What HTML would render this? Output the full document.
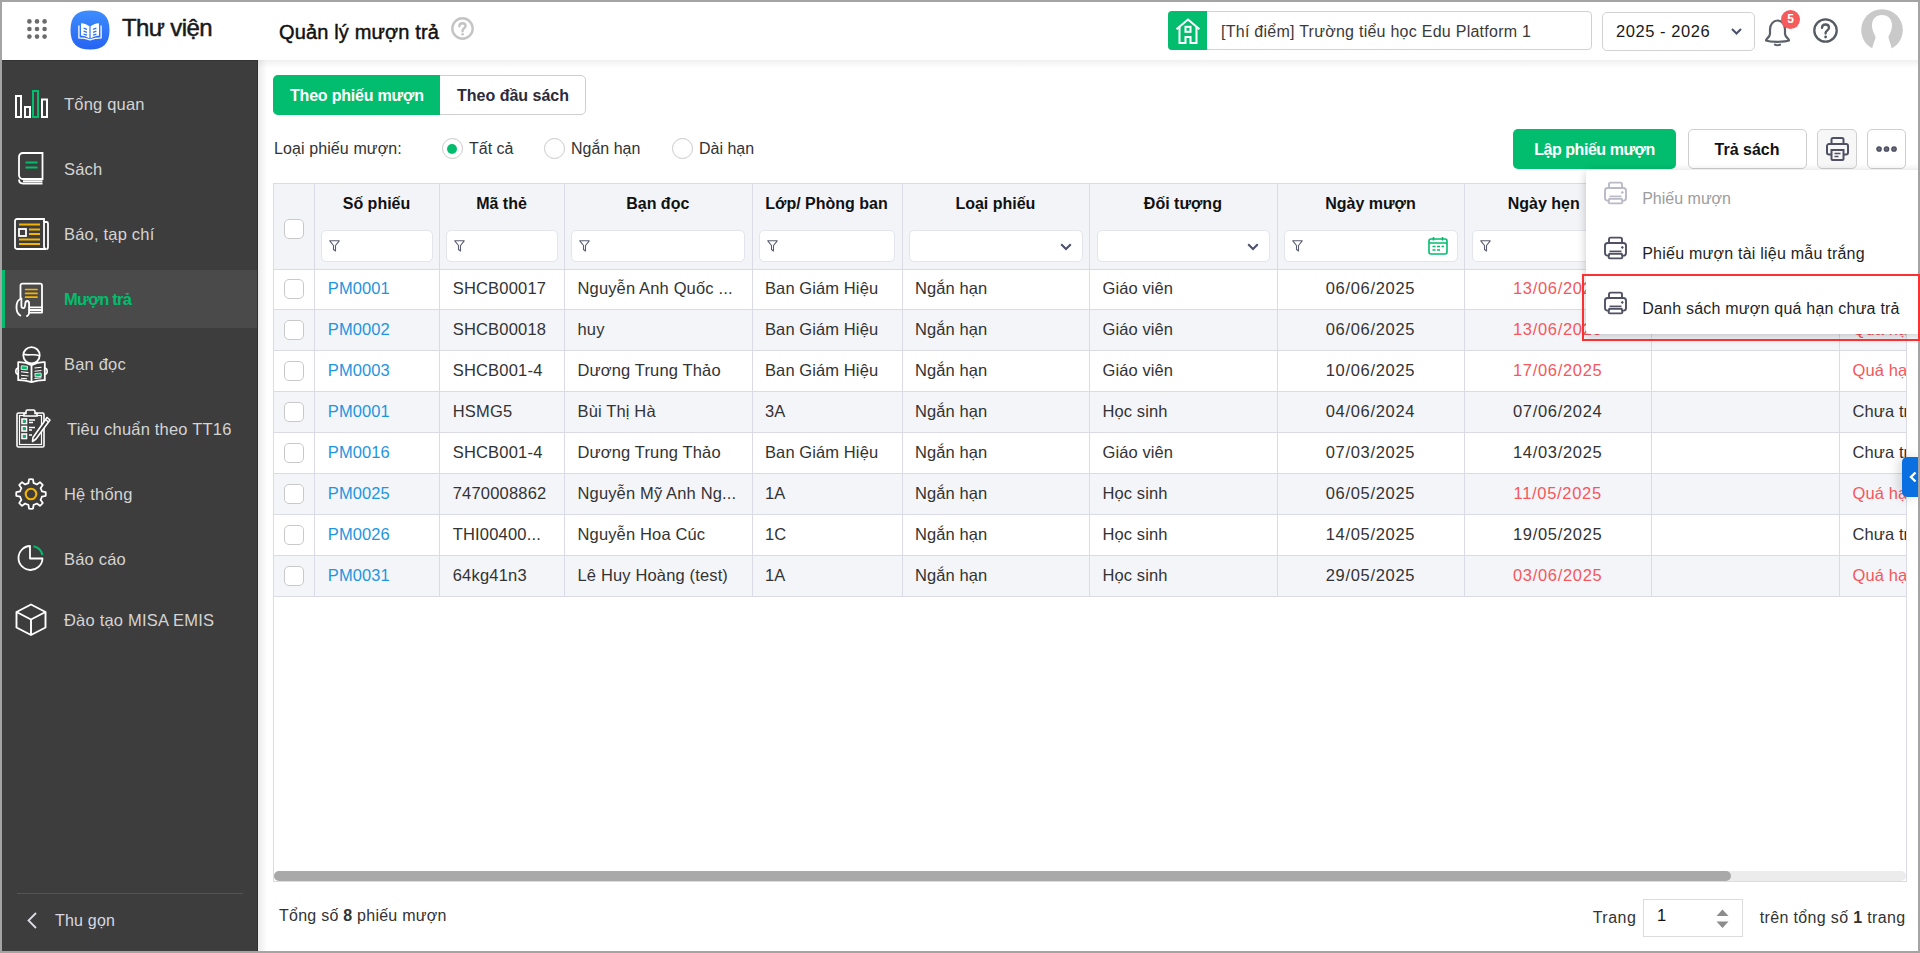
<!DOCTYPE html>
<html><head><meta charset="utf-8">
<style>
*{box-sizing:border-box;margin:0;padding:0}
html,body{width:1920px;height:953px;overflow:hidden;background:#fff;font-family:"Liberation Sans",sans-serif;}
.a{position:absolute}
.t{position:absolute;white-space:nowrap;line-height:1}
svg{position:absolute;overflow:visible}
</style></head><body>

<div class="a" style="left:0;top:0;width:1920px;height:60px;background:#fff"></div>
<svg style="left:27px;top:19px" width="20" height="20" viewBox="0 0 20 20" fill="#6b6b6b"><circle cx="2.4" cy="2.4" r="2.3"/><circle cx="10" cy="2.4" r="2.3"/><circle cx="17.6" cy="2.4" r="2.3"/><circle cx="2.4" cy="10" r="2.3"/><circle cx="10" cy="10" r="2.3"/><circle cx="17.6" cy="10" r="2.3"/><circle cx="2.4" cy="17.6" r="2.3"/><circle cx="10" cy="17.6" r="2.3"/><circle cx="17.6" cy="17.6" r="2.3"/></svg>
<svg style="left:70px;top:10px" width="40" height="40" viewBox="0 0 40 40">
<defs><linearGradient id="lg" x1="0" y1="0" x2="0" y2="1"><stop offset="0" stop-color="#3d8dff"/><stop offset="1" stop-color="#2663f2"/></linearGradient></defs>
<path d="M20 0.5C33 0.5 39.5 6 39.5 20S33 39.5 20 39.5 0.5 34 0.5 20 7 0.5 20 0.5Z" fill="url(#lg)"/>
<path d="M11 13.2C14.5 13.4 17.5 14.5 19.4 16.3V28.6C17.3 27 14.5 26 11 25.6Z" fill="#fff"/>
<path d="M29 13.2C25.5 13.4 22.5 14.5 20.6 16.3V28.6C22.7 27 25.5 26 29 25.6Z" fill="#fff"/>
<path d="M8.9 15.6V27.8C13 27.9 16.5 28.5 20 29.8C23.5 28.5 27 27.9 31.1 27.8V15.6" fill="none" stroke="#fff" stroke-width="1.3"/>
<path d="M13.6 18.2L17 19.4M13.6 21.2L17 22.4M13.6 24.2L17 25.2M23 19.4L26.4 18.2M23 22.4L26.4 21.2M23 25.2L26.4 24.2" stroke="#2f72f6" stroke-width="1.3"/></svg>
<div class="t" style="left:122px;top:16.18px;font-size:24px;color:#1a1a1a;letter-spacing:-0.6px;-webkit-text-stroke:0.5px #1a1a1a;">Thư viện</div>
<div class="t" style="left:279px;top:22.27px;font-size:20px;color:#111;letter-spacing:0.15px;-webkit-text-stroke:0.45px #111;">Quản lý mượn trả</div>
<svg style="left:451px;top:17px" width="23" height="23" viewBox="0 0 23 23"><circle cx="11.5" cy="11.5" r="10.2" fill="none" stroke="#c4c4c4" stroke-width="2.4"/><path d="M8.4 9.2C8.4 7.3 9.8 6.2 11.5 6.2S14.6 7.3 14.6 9C14.6 11 12 11.3 11.6 13.3V14.2" fill="none" stroke="#c4c4c4" stroke-width="2.4" stroke-linecap="round"/><circle cx="11.6" cy="17.3" r="1.2" fill="#c4c4c4"/></svg>
<div class="a" style="left:1167.5px;top:11px;width:424px;height:39px;border:1px solid #d2d2d2;border-radius:4px;background:#fff"></div>
<div class="a" style="left:1167.5px;top:11px;width:39.5px;height:39px;border-radius:4px 0 0 4px;background:#02bd6d"></div>
<svg style="left:1175px;top:18px" width="26" height="26" viewBox="0 0 26 26" fill="none" stroke="#fff" stroke-width="2">
<path d="M1.5 11.2L13 1.5L24.5 11.2"/><path d="M4.5 9V25H10.5V19H15.5V25H21.5V9"/><rect x="10.5" y="8.8" width="5" height="5"/></svg>
<div class="t" style="left:1221px;top:24.06px;font-size:16px;color:#3a3a3a;letter-spacing:0.26px;">[Thí điểm] Trường tiểu học Edu Platform 1</div>
<div class="a" style="left:1602px;top:12px;width:153px;height:39px;border:1px solid #d2d2d2;border-radius:5px;background:#fff"></div>
<div class="t" style="left:1616px;top:23.03px;font-size:16.5px;color:#1a1a1a;letter-spacing:0.55px;">2025 - 2026</div>
<svg style="left:1731px;top:28px" width="11" height="7" viewBox="0 0 11 7"><path d="M1 1L5.5 5.5L10 1" fill="none" stroke="#4b4f6a" stroke-width="2"/></svg>
<svg style="left:1764px;top:17px" width="27" height="30" viewBox="0 0 27 30" fill="none" stroke="#5c6068" stroke-width="2.2" stroke-linecap="round" stroke-linejoin="round">
<path d="M2 23.5C2 21.5 5.5 20.5 6 17V12.5C6 7.5 9.3 3.5 13.5 3.5S21 7.5 21 12.5V17C21.5 20.5 25 21.5 25 23.5C21 25.2 6 25.2 2 23.5Z"/><path d="M11 27.6C12.2 28.4 14.8 28.4 16 27.6"/></svg>
<div class="a" style="left:1781px;top:9.8px;width:19px;height:19px;border-radius:50%;background:#f55b5b;color:#fff;font-size:12px;font-weight:700;text-align:center;line-height:19px">5</div>
<svg style="left:1813px;top:17.5px" width="25" height="25" viewBox="0 0 25 25"><circle cx="12.5" cy="12.5" r="11.2" fill="none" stroke="#555b62" stroke-width="2.3"/><path d="M9 10C9 7.8 10.6 6.5 12.5 6.5S16 7.8 16 9.8C16 12.2 13 12.5 12.6 14.8V15.5" fill="none" stroke="#555b62" stroke-width="2.3" stroke-linecap="round"/><circle cx="12.6" cy="19" r="1.4" fill="#555b62"/></svg>
<svg style="left:1861px;top:9px" width="42" height="43" viewBox="0 0 42 43">
<circle cx="21" cy="21" r="20.8" fill="#c9c9c9"/>
<path d="M21 6C14.5 6 11 10.5 11 16.5C11 22 14 25.5 14.5 28C14.8 30 12 34 10.5 43H31.5C30 34 27.2 30 27.5 28C28 25.5 31 22 31 16.5C31 10.5 27.5 6 21 6Z" fill="#fff"/>
</svg>
<div class="a" style="left:258px;top:60px;width:1660px;height:8px;background:linear-gradient(rgba(0,0,0,0.06),rgba(0,0,0,0))"></div>
<div class="a" style="left:258px;top:60px;width:9px;height:891px;background:linear-gradient(90deg,rgba(0,0,0,0.08),rgba(0,0,0,0))"></div>
<div class="a" style="left:0;top:60px;width:258px;height:893px;background:#3d3d3d;border-right:1px solid #303030;border-top:1px solid #333"></div>
<div class="a" style="left:2px;top:270px;width:255px;height:58px;background:#4a4a4a"></div>
<div class="a" style="left:2px;top:270px;width:3px;height:58px;background:#02bd6d"></div>
<div class="t" style="left:64px;top:96.23px;font-size:16.5px;color:#d4d4d4;letter-spacing:0.2px;">Tổng quan</div>
<div class="t" style="left:64px;top:161.23px;font-size:16.5px;color:#d4d4d4;letter-spacing:0.2px;">Sách</div>
<div class="t" style="left:64px;top:226.23px;font-size:16.5px;color:#d4d4d4;letter-spacing:0.2px;">Báo, tạp chí</div>
<div class="t" style="left:64px;top:291.33px;font-size:16.5px;color:#02bd6d;font-weight:700;letter-spacing:-0.75px;">Mượn trả</div>
<div class="t" style="left:64px;top:355.93px;font-size:16.5px;color:#d4d4d4;letter-spacing:0.2px;">Bạn đọc</div>
<div class="t" style="left:67px;top:420.63px;font-size:16.5px;color:#d4d4d4;letter-spacing:0.2px;">Tiêu chuẩn theo TT16</div>
<div class="t" style="left:64px;top:486.43px;font-size:16.5px;color:#d4d4d4;letter-spacing:0.2px;">Hệ thống</div>
<div class="t" style="left:64px;top:551.23px;font-size:16.5px;color:#d4d4d4;letter-spacing:0.2px;">Báo cáo</div>
<div class="t" style="left:64px;top:612.23px;font-size:16.5px;color:#d4d4d4;letter-spacing:0.2px;">Đào tạo MISA EMIS</div>
<svg style="left:15px;top:90px" width="33" height="28" viewBox="0 0 33 28" fill="none" stroke-width="2">
<rect x="1" y="6" width="5" height="21" stroke="#fff"/><rect x="10" y="17" width="5" height="10" stroke="#fff"/>
<rect x="18" y="1" width="5" height="26" stroke="#02bd6d"/><rect x="27" y="9.5" width="5" height="17.5" stroke="#fff"/></svg>
<svg style="left:18px;top:152px" width="26" height="33" viewBox="0 0 26 33" fill="none" stroke-width="1.8">
<path d="M5 1H24.5V27H5C2.5 27 1 25.5 1 23V5C1 2.5 2.5 1 5 1Z" stroke="#fff"/>
<path d="M1 27.5C1 30 2.5 31.5 5 31.5H24.5" stroke="#fff"/><path d="M5 29.2H24.5" stroke="#fff"/>
<path d="M7.5 10.5H19.5M7.5 15.5H19.5" stroke="#02bd6d" stroke-width="2"/></svg>
<svg style="left:14px;top:218px" width="35" height="32" viewBox="0 0 35 32" fill="none" stroke-width="1.8">
<path d="M3 1H30V28.5C30 30 31 31 32.5 31H3C1.8 31 1 30.2 1 29V3C1 1.8 1.8 1 3 1Z" stroke="#fff"/>
<path d="M30 4H32.5C33.5 4 34 4.5 34 5.5V29C34 30.2 33.3 31 32.5 31" stroke="#fff"/>
<rect x="5" y="11" width="7" height="7" stroke="#fff"/>
<path d="M5 6.5H26M15 11.5H26M15 16H26M5 21.5H26M5 26H26" stroke="#f4b400" stroke-width="2"/></svg>
<svg style="left:16px;top:283px" width="27" height="34" viewBox="0 0 27 34" fill="none" stroke-width="1.8" stroke-linecap="round" stroke-linejoin="round">
<path d="M4.5 16V2.5C4.5 1.4 5.3 0.6 6.4 0.6H24.2C25.3 0.6 26 1.4 26 2.5V29.6H13.2" stroke="#fff"/>
<path d="M13.2 24.3H26M13.2 27H26" stroke="#fff"/>
<path d="M9.6 6.5H21M9.6 10.4H21M9.6 14.2H21" stroke="#f4b400" stroke-width="1.7"/>
<path d="M3.5 16.5C1 18 0.4 20.5 0.5 25C0.6 29 2.2 31.2 4.3 32.6" stroke="#fff"/>
<path d="M5.4 15.5V23.2C5.4 24.6 6.6 25.2 7.8 25C9.2 24.7 9.1 22.5 9.3 20.5C9.5 18.8 10.3 18 11.3 18C12.6 18 13.1 19.3 13.1 20.8V29.8C13.1 31.2 12.4 32.3 11 33.1" stroke="#fff"/></svg>
<svg style="left:15px;top:346px" width="34" height="37" viewBox="0 0 34 37" fill="none" stroke-width="1.8" stroke-linejoin="round">
<circle cx="16.5" cy="9.3" r="8.2" stroke="#fff"/><path d="M8.6 8C12 10.5 19 7 24.4 9.8" stroke="#fff" stroke-width="1.6"/>
<path d="M3.2 16.2C8 16 12.5 17 16.5 19.2C20.5 17 25 16 29.8 16.2V34.2C25 34 20.5 35 16.5 36.2C12.5 35 8 34 3.2 34.2Z" stroke="#fff" fill="#3d3d3d"/>
<path d="M16.5 19.2V36" stroke="#fff"/>
<path d="M3.2 22C1.4 22.3 0.8 23.6 0.8 25.2S1.4 28.1 3.2 28.4M29.8 22C31.6 22.3 32.2 23.6 32.2 25.2S31.6 28.1 29.8 28.4" stroke="#fff" stroke-width="1.6"/>
<path d="M6 25.8L13.5 26.6M6 29.2L13.5 30M6 32.2L12 32.8M19.5 22L26.5 21.3M19.5 25.2L26.5 24.5M19.5 32.5L26.5 31.8" stroke="#fff" stroke-width="1.1"/>
<rect x="6.2" y="20" width="6.2" height="3.6" fill="#02bd6d" stroke="#fff" stroke-width="0.8" transform="rotate(5 9.3 21.8)"/>
<rect x="20" y="27.3" width="6.2" height="3.4" fill="#02bd6d" stroke="#fff" stroke-width="0.8" transform="rotate(-5 23 29)"/></svg>
<svg style="left:16px;top:409px" width="35" height="39" viewBox="0 0 35 39" fill="none" stroke-width="1.6">
<rect x="1" y="4" width="27" height="34" rx="1.5" stroke="#fff"/><rect x="3.5" y="6.5" width="22" height="29" stroke="#fff" stroke-width="1.2"/>
<path d="M10 4.5V2.5C10 1.5 10.5 1 11.5 1H17.5C18.5 1 19 1.5 19 2.5V4.5H21V7H8V4.5Z" stroke="#fff" fill="#3d3d3d"/>
<rect x="6" y="10" width="4.5" height="4.5" stroke="#fff"/><rect x="6" y="17.5" width="4.5" height="4.5" stroke="#fff"/><rect x="6" y="25" width="4.5" height="4.5" stroke="#fff"/>
<rect x="7" y="11" width="2.5" height="2.5" fill="#02bd6d" stroke="none"/><rect x="7" y="18.5" width="2.5" height="2.5" fill="#02bd6d" stroke="none"/><rect x="7" y="26" width="2.5" height="2.5" fill="#02bd6d" stroke="none"/>
<path d="M13 11H19M13 13.5H17M13 18.5H19M13 21H16M13 26H16" stroke="#fff" stroke-width="1.3"/>
<path d="M31 8.5L34 11L20 30L16.5 32.5L17 28.5Z" stroke="#fff" fill="#3d3d3d" stroke-linejoin="round"/><path d="M29.5 10.5L32.5 13" stroke="#fff"/></svg>
<svg style="left:15px;top:478px" width="32" height="32" viewBox="0 0 32 32" fill="none">
<path d="M13.39 5.11L14.03 1.33A14.8 14.8 0 0 1 17.97 1.33L18.61 5.11A11.2 11.2 0 0 1 21.85 6.45L24.98 4.23A14.8 14.8 0 0 1 27.77 7.02L25.55 10.15A11.2 11.2 0 0 1 26.89 13.39L30.67 14.03A14.8 14.8 0 0 1 30.67 17.97L26.89 18.61A11.2 11.2 0 0 1 25.55 21.85L27.77 24.98A14.8 14.8 0 0 1 24.98 27.77L21.85 25.55A11.2 11.2 0 0 1 18.61 26.89L17.97 30.67A14.8 14.8 0 0 1 14.03 30.67L13.39 26.89A11.2 11.2 0 0 1 10.15 25.55L7.02 27.77A14.8 14.8 0 0 1 4.23 24.98L6.45 21.85A11.2 11.2 0 0 1 5.11 18.61L1.33 17.97A14.8 14.8 0 0 1 1.33 14.03L5.11 13.39A11.2 11.2 0 0 1 6.45 10.15L4.23 7.02A14.8 14.8 0 0 1 7.02 4.23L10.15 6.45Z" stroke="#fff" stroke-width="1.8" stroke-linejoin="round"/><circle cx="16" cy="16" r="5.3" stroke="#f4b400" stroke-width="2.1"/></svg>
<svg style="left:17px;top:544px" width="28" height="28" viewBox="0 0 28 28" fill="none" stroke-width="1.8">
<path d="M13 2A12 12 0 1 0 25.5 14.5H13Z" stroke="#fff" stroke-linejoin="round"/><path d="M16.5 2.3A11.5 11.5 0 0 1 25.5 11" stroke="#02bd6d" stroke-width="2"/></svg>
<svg style="left:15px;top:603px" width="32" height="33" viewBox="0 0 32 33" fill="none" stroke="#fff" stroke-width="1.9" stroke-linejoin="round">
<path d="M16 1.5L30.5 9V24.5L16 32L1.5 24.5V9Z"/><path d="M1.5 9L16 16.5L30.5 9M16 16.5V32"/></svg>
<div class="a" style="left:17px;top:893px;width:226px;height:1px;background:#4a5566"></div>
<svg style="left:27px;top:912px" width="10" height="17" viewBox="0 0 10 17"><path d="M9 1L1.5 8.5L9 16" fill="none" stroke="#dcdce4" stroke-width="1.8"/></svg>
<div class="t" style="left:55px;top:912.66px;font-size:16px;color:#d8d8e2;letter-spacing:0.2px;">Thu gọn</div>
<div class="a" style="left:273px;top:75px;width:312.5px;height:40px;border:1px solid #cfcfcf;border-radius:5px;background:#fff"></div>
<div class="a" style="left:273px;top:75px;width:167px;height:40px;border-radius:5px 0 0 5px;background:#02bd6d"></div>
<div class="t" style="left:290px;top:88.26px;font-size:16px;color:#fff;font-weight:700;letter-spacing:-0.2px;">Theo phiếu mượn</div>
<div class="t" style="left:457px;top:88.26px;font-size:16px;color:#2b2b3d;font-weight:700;">Theo đầu sách</div>
<div class="t" style="left:274px;top:141.16px;font-size:16px;color:#333333;letter-spacing:0.1px;">Loại phiếu mượn:</div>
<div class="a" style="left:441.5px;top:138.4px;width:21px;height:21px;border:1px solid #c9c9c9;border-radius:50%;background:#fff"></div>
<div class="a" style="left:447px;top:143.6px;width:10px;height:10px;border-radius:50%;background:#02bd6d"></div>
<div class="t" style="left:469px;top:141.16px;font-size:16px;color:#333333;">Tất cả</div>
<div class="a" style="left:543.5px;top:138.4px;width:21px;height:21px;border:1px solid #c9c9c9;border-radius:50%;background:#fff"></div>
<div class="t" style="left:571px;top:141.16px;font-size:16px;color:#333333;">Ngắn hạn</div>
<div class="a" style="left:671.5px;top:138.4px;width:21px;height:21px;border:1px solid #c9c9c9;border-radius:50%;background:#fff"></div>
<div class="t" style="left:699px;top:141.16px;font-size:16px;color:#333333;">Dài hạn</div>
<div class="a" style="left:1513px;top:129px;width:163px;height:39.5px;border-radius:5px;background:#02bd6d"></div>
<div class="t" style="left:1513px;top:142.26px;font-size:16px;color:#fff;font-weight:700;width:163px;text-align:center;letter-spacing:-0.45px;">Lập phiếu mượn</div>
<div class="a" style="left:1687.5px;top:129px;width:119px;height:39.5px;border:1px solid #cfcfcf;border-radius:5px;background:#fff"></div>
<div class="t" style="left:1687.5px;top:142.26px;font-size:16px;color:#111;font-weight:700;width:119px;text-align:center;">Trả sách</div>
<div class="a" style="left:1817px;top:129px;width:39.5px;height:39.5px;border:1px solid #cfcfcf;border-radius:5px;background:#f7f7f8"></div>
<svg style="left:1826px;top:137px" width="23" height="24" viewBox="0 0 23 24" fill="none" stroke="#4f5163" stroke-width="2">
<path d="M5.5 7V2.5C5.5 1.7 6.2 1 7 1H16C16.8 1 17.5 1.7 17.5 2.5V7"/>
<path d="M5.5 17.5H3C1.9 17.5 1 16.6 1 15.5V9C1 7.9 1.9 7 3 7H20C21.1 7 22 7.9 22 9V15.5C22 16.6 21.1 17.5 20 17.5H17.5"/>
<path d="M5.5 13H17.5V22C17.5 22.6 17.1 23 16.5 23H6.5C5.9 23 5.5 22.6 5.5 22Z"/><path d="M8.5 16.5H14.5M8.5 19.5H12.5" stroke-width="1.6"/></svg>
<div class="a" style="left:1867.3px;top:129px;width:39.2px;height:39.5px;border:1px solid #cfcfcf;border-radius:5px;background:#fff"></div>
<svg style="left:1876.4px;top:145.5px" width="22" height="6" viewBox="0 0 22 6" fill="#6a6c7a" stroke="#4a4d5e" stroke-width="1.3"><circle cx="3" cy="3" r="2.2"/><circle cx="10.5" cy="3" r="2.2"/><circle cx="18" cy="3" r="2.2"/></svg>
<div class="a" style="left:273px;top:183px;width:1633.5px;height:698.5px;border:1px solid #dadbe6;background:#fff"></div>
<div class="a" style="left:274px;top:184px;width:1631.5px;height:85px;background:#f3f4f8"></div>
<div class="a" style="left:274px;top:269.20px;width:1631.5px;height:40.00px;background:#fff"></div>
<div class="a" style="left:274px;top:309.20px;width:1631.5px;height:41.03px;background:#f4f5f9"></div>
<div class="a" style="left:274px;top:350.23px;width:1631.5px;height:41.03px;background:#fff"></div>
<div class="a" style="left:274px;top:391.26px;width:1631.5px;height:41.03px;background:#f4f5f9"></div>
<div class="a" style="left:274px;top:432.29px;width:1631.5px;height:41.03px;background:#fff"></div>
<div class="a" style="left:274px;top:473.32px;width:1631.5px;height:41.03px;background:#f4f5f9"></div>
<div class="a" style="left:274px;top:514.35px;width:1631.5px;height:41.03px;background:#fff"></div>
<div class="a" style="left:274px;top:555.38px;width:1631.5px;height:41.03px;background:#f4f5f9"></div>
<div class="a" style="left:274px;top:268.70px;width:1631.5px;height:1px;background:#dadbe6"></div>
<div class="a" style="left:274px;top:308.70px;width:1631.5px;height:1px;background:#dadbe6"></div>
<div class="a" style="left:274px;top:349.73px;width:1631.5px;height:1px;background:#dadbe6"></div>
<div class="a" style="left:274px;top:390.76px;width:1631.5px;height:1px;background:#dadbe6"></div>
<div class="a" style="left:274px;top:431.79px;width:1631.5px;height:1px;background:#dadbe6"></div>
<div class="a" style="left:274px;top:472.82px;width:1631.5px;height:1px;background:#dadbe6"></div>
<div class="a" style="left:274px;top:513.85px;width:1631.5px;height:1px;background:#dadbe6"></div>
<div class="a" style="left:274px;top:554.88px;width:1631.5px;height:1px;background:#dadbe6"></div>
<div class="a" style="left:274px;top:595.91px;width:1631.5px;height:1px;background:#dadbe6"></div>
<div class="a" style="left:314px;top:183px;width:1px;height:413.41px;background:#dadbe6"></div>
<div class="a" style="left:439px;top:183px;width:1px;height:413.41px;background:#dadbe6"></div>
<div class="a" style="left:564px;top:183px;width:1px;height:413.41px;background:#dadbe6"></div>
<div class="a" style="left:751.5px;top:183px;width:1px;height:413.41px;background:#dadbe6"></div>
<div class="a" style="left:901.5px;top:183px;width:1px;height:413.41px;background:#dadbe6"></div>
<div class="a" style="left:1089.3px;top:183px;width:1px;height:413.41px;background:#dadbe6"></div>
<div class="a" style="left:1276.5px;top:183px;width:1px;height:413.41px;background:#dadbe6"></div>
<div class="a" style="left:1464.4px;top:183px;width:1px;height:413.41px;background:#dadbe6"></div>
<div class="a" style="left:1651px;top:183px;width:1px;height:413.41px;background:#dadbe6"></div>
<div class="a" style="left:1839px;top:183px;width:1px;height:413.41px;background:#dadbe6"></div>
<div class="t" style="left:314px;top:195.86px;font-size:16px;color:#111;font-weight:700;width:125px;text-align:center;">Số phiếu</div>
<div class="t" style="left:439px;top:195.86px;font-size:16px;color:#111;font-weight:700;width:125px;text-align:center;">Mã thẻ</div>
<div class="t" style="left:564px;top:195.86px;font-size:16px;color:#111;font-weight:700;width:187.5px;text-align:center;">Bạn đọc</div>
<div class="t" style="left:751.5px;top:195.86px;font-size:16px;color:#111;font-weight:700;width:150.0px;text-align:center;">Lớp/ Phòng ban</div>
<div class="t" style="left:901.5px;top:195.86px;font-size:16px;color:#111;font-weight:700;width:187.79999999999995px;text-align:center;">Loại phiếu</div>
<div class="t" style="left:1089.3px;top:195.86px;font-size:16px;color:#111;font-weight:700;width:187.20000000000005px;text-align:center;">Đối tượng</div>
<div class="t" style="left:1276.5px;top:195.86px;font-size:16px;color:#111;font-weight:700;width:187.9000000000001px;text-align:center;">Ngày mượn</div>
<div class="t" style="left:1507.7px;top:195.86px;font-size:16px;color:#111;font-weight:700;">Ngày hẹn</div>
<div class="t" style="left:1651px;top:195.86px;font-size:16px;color:#111;font-weight:700;width:188px;text-align:center;">Ngày trả</div>
<div class="t" style="left:1839px;top:195.86px;font-size:16px;color:#111;font-weight:700;width:188px;text-align:center;">Trạng thái</div>
<div class="a" style="left:284.3px;top:219.3px;width:19.5px;height:19.5px;border:1.5px solid #c9c9c9;border-radius:5px;background:#fff"></div>
<div class="a" style="left:321.2px;top:230px;width:111.5px;height:31.5px;border:1px solid #e4e5ec;border-radius:5px;background:#fff"></div>
<svg style="left:329.4px;top:239.5px" width="11" height="12" viewBox="0 0 11 12"><path d="M0.8 0.8H10.2L6.5 5.5V11L4.5 9.5V5.5Z" fill="none" stroke="#5a5c70" stroke-width="1.1" stroke-linejoin="round"/></svg>
<div class="a" style="left:446.2px;top:230px;width:111.5px;height:31.5px;border:1px solid #e4e5ec;border-radius:5px;background:#fff"></div>
<svg style="left:454.4px;top:239.5px" width="11" height="12" viewBox="0 0 11 12"><path d="M0.8 0.8H10.2L6.5 5.5V11L4.5 9.5V5.5Z" fill="none" stroke="#5a5c70" stroke-width="1.1" stroke-linejoin="round"/></svg>
<div class="a" style="left:571.2px;top:230px;width:174.0px;height:31.5px;border:1px solid #e4e5ec;border-radius:5px;background:#fff"></div>
<svg style="left:579.4000000000001px;top:239.5px" width="11" height="12" viewBox="0 0 11 12"><path d="M0.8 0.8H10.2L6.5 5.5V11L4.5 9.5V5.5Z" fill="none" stroke="#5a5c70" stroke-width="1.1" stroke-linejoin="round"/></svg>
<div class="a" style="left:758.7px;top:230px;width:136.5px;height:31.5px;border:1px solid #e4e5ec;border-radius:5px;background:#fff"></div>
<svg style="left:766.9000000000001px;top:239.5px" width="11" height="12" viewBox="0 0 11 12"><path d="M0.8 0.8H10.2L6.5 5.5V11L4.5 9.5V5.5Z" fill="none" stroke="#5a5c70" stroke-width="1.1" stroke-linejoin="round"/></svg>
<div class="a" style="left:908.7px;top:230px;width:174.29999999999995px;height:31.5px;border:1px solid #e4e5ec;border-radius:5px;background:#fff"></div>
<svg style="left:1059.8px;top:242.5px" width="12" height="8" viewBox="0 0 12 8"><path d="M1.2 1.2L6 6L10.8 1.2" fill="none" stroke="#4b4f6a" stroke-width="2"/></svg>
<div class="a" style="left:1096.5px;top:230px;width:173.70000000000005px;height:31.5px;border:1px solid #e4e5ec;border-radius:5px;background:#fff"></div>
<svg style="left:1247.0px;top:242.5px" width="12" height="8" viewBox="0 0 12 8"><path d="M1.2 1.2L6 6L10.8 1.2" fill="none" stroke="#4b4f6a" stroke-width="2"/></svg>
<div class="a" style="left:1283.7px;top:230px;width:174.4000000000001px;height:31.5px;border:1px solid #e4e5ec;border-radius:5px;background:#fff"></div>
<svg style="left:1291.9px;top:239.5px" width="11" height="12" viewBox="0 0 11 12"><path d="M0.8 0.8H10.2L6.5 5.5V11L4.5 9.5V5.5Z" fill="none" stroke="#5a5c70" stroke-width="1.1" stroke-linejoin="round"/></svg>
<svg style="left:1427.9px;top:235.8px" width="20" height="19" viewBox="0 0 20 19" fill="none" stroke="#02bd6d" stroke-width="1.6">
<rect x="1" y="3" width="18" height="15" rx="2"/><path d="M1 7H19M5.5 1V4.5M14.5 1V4.5"/>
<path d="M4.5 10.5H7.5M9 10.5H12M13.5 10.5H16M4.5 14H7.5M9 14H12" stroke-width="1.4"/></svg>
<div class="a" style="left:1471.6000000000001px;top:230px;width:173.0999999999999px;height:31.5px;border:1px solid #e4e5ec;border-radius:5px;background:#fff"></div>
<svg style="left:1479.8000000000002px;top:239.5px" width="11" height="12" viewBox="0 0 11 12"><path d="M0.8 0.8H10.2L6.5 5.5V11L4.5 9.5V5.5Z" fill="none" stroke="#5a5c70" stroke-width="1.1" stroke-linejoin="round"/></svg>
<div class="a" style="left:1658.2px;top:230px;width:174.5px;height:31.5px;border:1px solid #e4e5ec;border-radius:5px;background:#fff"></div>
<svg style="left:1666.4px;top:239.5px" width="11" height="12" viewBox="0 0 11 12"><path d="M0.8 0.8H10.2L6.5 5.5V11L4.5 9.5V5.5Z" fill="none" stroke="#5a5c70" stroke-width="1.1" stroke-linejoin="round"/></svg>
<div class="a" style="left:1846.2px;top:230px;width:174.5px;height:31.5px;border:1px solid #e4e5ec;border-radius:5px;background:#fff"></div>
<svg style="left:1854.4px;top:239.5px" width="11" height="12" viewBox="0 0 11 12"><path d="M0.8 0.8H10.2L6.5 5.5V11L4.5 9.5V5.5Z" fill="none" stroke="#5a5c70" stroke-width="1.1" stroke-linejoin="round"/></svg>
<div class="a" style="left:284px;top:279.00px;width:19.5px;height:19.5px;border:1.5px solid #c9c9c9;border-radius:5px;background:#fff"></div>
<div class="t" style="left:327.8px;top:280.03px;font-size:16.5px;color:#1f95e0;letter-spacing:0.1px;">PM0001</div>
<div class="t" style="left:452.7px;top:280.03px;font-size:16.5px;color:#333333;letter-spacing:0.2px;">SHCB00017</div>
<div class="t" style="left:577.5px;top:280.03px;font-size:16.5px;color:#333333;letter-spacing:0.15px;">Nguyễn Anh Quốc ...</div>
<div class="t" style="left:765px;top:280.03px;font-size:16.5px;color:#333333;letter-spacing:0.1px;">Ban Giám Hiệu</div>
<div class="t" style="left:915px;top:280.03px;font-size:16.5px;color:#333333;letter-spacing:0.1px;">Ngắn hạn</div>
<div class="t" style="left:1102.5px;top:280.03px;font-size:16.5px;color:#333333;letter-spacing:0.1px;">Giáo viên</div>
<div class="t" style="left:1276.5px;top:280.03px;font-size:16.5px;color:#333333;width:187.9000000000001px;text-align:center;letter-spacing:0.7px;">06/06/2025</div>
<div class="t" style="left:1464.4px;top:280.03px;font-size:16.5px;color:#f5575c;width:186.5999999999999px;text-align:center;letter-spacing:0.7px;">13/06/2025</div>
<div class="t" style="left:1852.5px;top:280.03px;font-size:16.5px;color:#f5575c;letter-spacing:0.1px;">Quá hạn</div>
<div class="a" style="left:284px;top:320.03px;width:19.5px;height:19.5px;border:1.5px solid #c9c9c9;border-radius:5px;background:#fff"></div>
<div class="t" style="left:327.8px;top:321.06px;font-size:16.5px;color:#1f95e0;letter-spacing:0.1px;">PM0002</div>
<div class="t" style="left:452.7px;top:321.06px;font-size:16.5px;color:#333333;letter-spacing:0.2px;">SHCB00018</div>
<div class="t" style="left:577.5px;top:321.06px;font-size:16.5px;color:#333333;letter-spacing:0.15px;">huy</div>
<div class="t" style="left:765px;top:321.06px;font-size:16.5px;color:#333333;letter-spacing:0.1px;">Ban Giám Hiệu</div>
<div class="t" style="left:915px;top:321.06px;font-size:16.5px;color:#333333;letter-spacing:0.1px;">Ngắn hạn</div>
<div class="t" style="left:1102.5px;top:321.06px;font-size:16.5px;color:#333333;letter-spacing:0.1px;">Giáo viên</div>
<div class="t" style="left:1276.5px;top:321.06px;font-size:16.5px;color:#333333;width:187.9000000000001px;text-align:center;letter-spacing:0.7px;">06/06/2025</div>
<div class="t" style="left:1464.4px;top:321.06px;font-size:16.5px;color:#f5575c;width:186.5999999999999px;text-align:center;letter-spacing:0.7px;">13/06/2025</div>
<div class="t" style="left:1852.5px;top:321.06px;font-size:16.5px;color:#f5575c;letter-spacing:0.1px;">Quá hạn</div>
<div class="a" style="left:284px;top:361.06px;width:19.5px;height:19.5px;border:1.5px solid #c9c9c9;border-radius:5px;background:#fff"></div>
<div class="t" style="left:327.8px;top:362.09px;font-size:16.5px;color:#1f95e0;letter-spacing:0.1px;">PM0003</div>
<div class="t" style="left:452.7px;top:362.09px;font-size:16.5px;color:#333333;letter-spacing:0.2px;">SHCB001-4</div>
<div class="t" style="left:577.5px;top:362.09px;font-size:16.5px;color:#333333;letter-spacing:0.15px;">Dương Trung Thảo</div>
<div class="t" style="left:765px;top:362.09px;font-size:16.5px;color:#333333;letter-spacing:0.1px;">Ban Giám Hiệu</div>
<div class="t" style="left:915px;top:362.09px;font-size:16.5px;color:#333333;letter-spacing:0.1px;">Ngắn hạn</div>
<div class="t" style="left:1102.5px;top:362.09px;font-size:16.5px;color:#333333;letter-spacing:0.1px;">Giáo viên</div>
<div class="t" style="left:1276.5px;top:362.09px;font-size:16.5px;color:#333333;width:187.9000000000001px;text-align:center;letter-spacing:0.7px;">10/06/2025</div>
<div class="t" style="left:1464.4px;top:362.09px;font-size:16.5px;color:#f5575c;width:186.5999999999999px;text-align:center;letter-spacing:0.7px;">17/06/2025</div>
<div class="t" style="left:1852.5px;top:362.09px;font-size:16.5px;color:#f5575c;letter-spacing:0.1px;">Quá hạn</div>
<div class="a" style="left:284px;top:402.09px;width:19.5px;height:19.5px;border:1.5px solid #c9c9c9;border-radius:5px;background:#fff"></div>
<div class="t" style="left:327.8px;top:403.12px;font-size:16.5px;color:#1f95e0;letter-spacing:0.1px;">PM0001</div>
<div class="t" style="left:452.7px;top:403.12px;font-size:16.5px;color:#333333;letter-spacing:0.2px;">HSMG5</div>
<div class="t" style="left:577.5px;top:403.12px;font-size:16.5px;color:#333333;letter-spacing:0.15px;">Bùi Thị Hà</div>
<div class="t" style="left:765px;top:403.12px;font-size:16.5px;color:#333333;letter-spacing:0.1px;">3A</div>
<div class="t" style="left:915px;top:403.12px;font-size:16.5px;color:#333333;letter-spacing:0.1px;">Ngắn hạn</div>
<div class="t" style="left:1102.5px;top:403.12px;font-size:16.5px;color:#333333;letter-spacing:0.1px;">Học sinh</div>
<div class="t" style="left:1276.5px;top:403.12px;font-size:16.5px;color:#333333;width:187.9000000000001px;text-align:center;letter-spacing:0.7px;">04/06/2024</div>
<div class="t" style="left:1464.4px;top:403.12px;font-size:16.5px;color:#333333;width:186.5999999999999px;text-align:center;letter-spacing:0.7px;">07/06/2024</div>
<div class="t" style="left:1852.5px;top:403.12px;font-size:16.5px;color:#333333;letter-spacing:0.1px;">Chưa trả</div>
<div class="a" style="left:284px;top:443.12px;width:19.5px;height:19.5px;border:1.5px solid #c9c9c9;border-radius:5px;background:#fff"></div>
<div class="t" style="left:327.8px;top:444.15px;font-size:16.5px;color:#1f95e0;letter-spacing:0.1px;">PM0016</div>
<div class="t" style="left:452.7px;top:444.15px;font-size:16.5px;color:#333333;letter-spacing:0.2px;">SHCB001-4</div>
<div class="t" style="left:577.5px;top:444.15px;font-size:16.5px;color:#333333;letter-spacing:0.15px;">Dương Trung Thảo</div>
<div class="t" style="left:765px;top:444.15px;font-size:16.5px;color:#333333;letter-spacing:0.1px;">Ban Giám Hiệu</div>
<div class="t" style="left:915px;top:444.15px;font-size:16.5px;color:#333333;letter-spacing:0.1px;">Ngắn hạn</div>
<div class="t" style="left:1102.5px;top:444.15px;font-size:16.5px;color:#333333;letter-spacing:0.1px;">Giáo viên</div>
<div class="t" style="left:1276.5px;top:444.15px;font-size:16.5px;color:#333333;width:187.9000000000001px;text-align:center;letter-spacing:0.7px;">07/03/2025</div>
<div class="t" style="left:1464.4px;top:444.15px;font-size:16.5px;color:#333333;width:186.5999999999999px;text-align:center;letter-spacing:0.7px;">14/03/2025</div>
<div class="t" style="left:1852.5px;top:444.15px;font-size:16.5px;color:#333333;letter-spacing:0.1px;">Chưa trả</div>
<div class="a" style="left:284px;top:484.15px;width:19.5px;height:19.5px;border:1.5px solid #c9c9c9;border-radius:5px;background:#fff"></div>
<div class="t" style="left:327.8px;top:485.18px;font-size:16.5px;color:#1f95e0;letter-spacing:0.1px;">PM0025</div>
<div class="t" style="left:452.7px;top:485.18px;font-size:16.5px;color:#333333;letter-spacing:0.2px;">7470008862</div>
<div class="t" style="left:577.5px;top:485.18px;font-size:16.5px;color:#333333;letter-spacing:0.15px;">Nguyễn Mỹ Anh Ng...</div>
<div class="t" style="left:765px;top:485.18px;font-size:16.5px;color:#333333;letter-spacing:0.1px;">1A</div>
<div class="t" style="left:915px;top:485.18px;font-size:16.5px;color:#333333;letter-spacing:0.1px;">Ngắn hạn</div>
<div class="t" style="left:1102.5px;top:485.18px;font-size:16.5px;color:#333333;letter-spacing:0.1px;">Học sinh</div>
<div class="t" style="left:1276.5px;top:485.18px;font-size:16.5px;color:#333333;width:187.9000000000001px;text-align:center;letter-spacing:0.7px;">06/05/2025</div>
<div class="t" style="left:1464.4px;top:485.18px;font-size:16.5px;color:#f5575c;width:186.5999999999999px;text-align:center;letter-spacing:0.7px;">11/05/2025</div>
<div class="t" style="left:1852.5px;top:485.18px;font-size:16.5px;color:#f5575c;letter-spacing:0.1px;">Quá hạn</div>
<div class="a" style="left:284px;top:525.18px;width:19.5px;height:19.5px;border:1.5px solid #c9c9c9;border-radius:5px;background:#fff"></div>
<div class="t" style="left:327.8px;top:526.21px;font-size:16.5px;color:#1f95e0;letter-spacing:0.1px;">PM0026</div>
<div class="t" style="left:452.7px;top:526.21px;font-size:16.5px;color:#333333;letter-spacing:0.2px;">THI00400...</div>
<div class="t" style="left:577.5px;top:526.21px;font-size:16.5px;color:#333333;letter-spacing:0.15px;">Nguyễn Hoa Cúc</div>
<div class="t" style="left:765px;top:526.21px;font-size:16.5px;color:#333333;letter-spacing:0.1px;">1C</div>
<div class="t" style="left:915px;top:526.21px;font-size:16.5px;color:#333333;letter-spacing:0.1px;">Ngắn hạn</div>
<div class="t" style="left:1102.5px;top:526.21px;font-size:16.5px;color:#333333;letter-spacing:0.1px;">Học sinh</div>
<div class="t" style="left:1276.5px;top:526.21px;font-size:16.5px;color:#333333;width:187.9000000000001px;text-align:center;letter-spacing:0.7px;">14/05/2025</div>
<div class="t" style="left:1464.4px;top:526.21px;font-size:16.5px;color:#333333;width:186.5999999999999px;text-align:center;letter-spacing:0.7px;">19/05/2025</div>
<div class="t" style="left:1852.5px;top:526.21px;font-size:16.5px;color:#333333;letter-spacing:0.1px;">Chưa trả</div>
<div class="a" style="left:284px;top:566.21px;width:19.5px;height:19.5px;border:1.5px solid #c9c9c9;border-radius:5px;background:#fff"></div>
<div class="t" style="left:327.8px;top:567.24px;font-size:16.5px;color:#1f95e0;letter-spacing:0.1px;">PM0031</div>
<div class="t" style="left:452.7px;top:567.24px;font-size:16.5px;color:#333333;letter-spacing:0.2px;">64kg41n3</div>
<div class="t" style="left:577.5px;top:567.24px;font-size:16.5px;color:#333333;letter-spacing:0.15px;">Lê Huy Hoàng (test)</div>
<div class="t" style="left:765px;top:567.24px;font-size:16.5px;color:#333333;letter-spacing:0.1px;">1A</div>
<div class="t" style="left:915px;top:567.24px;font-size:16.5px;color:#333333;letter-spacing:0.1px;">Ngắn hạn</div>
<div class="t" style="left:1102.5px;top:567.24px;font-size:16.5px;color:#333333;letter-spacing:0.1px;">Học sinh</div>
<div class="t" style="left:1276.5px;top:567.24px;font-size:16.5px;color:#333333;width:187.9000000000001px;text-align:center;letter-spacing:0.7px;">29/05/2025</div>
<div class="t" style="left:1464.4px;top:567.24px;font-size:16.5px;color:#f5575c;width:186.5999999999999px;text-align:center;letter-spacing:0.7px;">03/06/2025</div>
<div class="t" style="left:1852.5px;top:567.24px;font-size:16.5px;color:#f5575c;letter-spacing:0.1px;">Quá hạn</div>
<div class="a" style="left:1906.5px;top:183px;width:11.5px;height:700.5px;background:#fff"></div>
<div class="a" style="left:1906.0px;top:183px;width:1px;height:698.5px;background:#dadbe6"></div>
<div class="a" style="left:274px;top:871px;width:1632px;height:10px;background:#ececec;border-radius:5px"></div>
<div class="a" style="left:274px;top:871px;width:1457px;height:10px;background:#a9a9a9;border-radius:5px"></div>
<div class="t" style="left:279px;top:908.26px;font-size:16px;color:#333333;letter-spacing:0.25px;">Tổng số <b>8</b> phiếu mượn</div>
<div class="t" style="left:1592.7px;top:910.16px;font-size:16px;color:#333333;letter-spacing:0.5px;">Trang</div>
<div class="a" style="left:1643.4px;top:899.3px;width:99.5px;height:38px;border:1px solid #dcdcdc;background:#fff"></div>
<div class="t" style="left:1657px;top:907.13px;font-size:16.5px;color:#111;">1</div>
<svg style="left:1716px;top:909px" width="13" height="20" viewBox="0 0 13 20" fill="#8c8c8c"><path d="M6.5 0.5L12.5 7H0.5Z"/><path d="M0.5 12.5H12.5L6.5 19Z"/></svg>
<div class="t" style="left:1759.7px;top:910.16px;font-size:16px;color:#333333;letter-spacing:0.35px;">trên tổng số <b>1</b> trang</div>
<div class="a" style="left:1902px;top:457px;width:18px;height:40px;border-radius:5px 0 0 5px;background:#0a6fe1;box-shadow:-3px 0 12px rgba(0,0,0,0.16)"></div>
<svg style="left:1909px;top:471px" width="8" height="12" viewBox="0 0 8 12"><path d="M6.5 1.5L2 6L6.5 10.5" fill="none" stroke="#fff" stroke-width="2.4"/></svg>
<div class="a" style="left:1586px;top:170px;width:340px;height:163.5px;background:#fff;border-radius:4px;box-shadow:0 2px 10px rgba(0,0,0,0.22)"></div>
<svg style="left:1604px;top:182px" width="23" height="22" viewBox="0 0 23 22" fill="none" stroke="#b9bac6" stroke-width="1.9" stroke-linejoin="round">
<path d="M5 6V2.2C5 1.3 5.7 0.6 6.6 0.6H16.4C17.3 0.6 18 1.3 18 2.2V6"/>
<path d="M4.8 18.6H3.6C2 18.6 1 17.6 1 16V8.6C1 7 2 6 3.6 6H19.4C21 6 22 7 22 8.6V16C22 17.6 21 18.6 19.4 18.6H18.2"/>
<path d="M5.5 14.3H17.5" stroke-width="1.5"/>
<path d="M5.3 16.8H17.7L18.3 19.6C18.5 20.8 18 21.4 17 21.4H6C5 21.4 4.5 20.8 4.7 19.6Z"/>
<rect x="17.2" y="9.3" width="2.2" height="2.2" fill="#b9bac6" stroke="none" transform="rotate(45 18.3 10.4)"/></svg>
<div class="t" style="left:1642.2px;top:191.16px;font-size:16px;color:#9c9c9c;">Phiếu mượn</div>
<svg style="left:1604px;top:237px" width="23" height="22" viewBox="0 0 23 22" fill="none" stroke="#4f5163" stroke-width="1.9" stroke-linejoin="round">
<path d="M5 6V2.2C5 1.3 5.7 0.6 6.6 0.6H16.4C17.3 0.6 18 1.3 18 2.2V6"/>
<path d="M4.8 18.6H3.6C2 18.6 1 17.6 1 16V8.6C1 7 2 6 3.6 6H19.4C21 6 22 7 22 8.6V16C22 17.6 21 18.6 19.4 18.6H18.2"/>
<path d="M5.5 14.3H17.5" stroke-width="1.5"/>
<path d="M5.3 16.8H17.7L18.3 19.6C18.5 20.8 18 21.4 17 21.4H6C5 21.4 4.5 20.8 4.7 19.6Z"/>
<rect x="17.2" y="9.3" width="2.2" height="2.2" fill="#4f5163" stroke="none" transform="rotate(45 18.3 10.4)"/></svg>
<div class="t" style="left:1642.2px;top:245.96px;font-size:16px;color:#1f1f1f;letter-spacing:0.23px;">Phiếu mượn tài liệu mẫu trắng</div>
<svg style="left:1604px;top:292px" width="23" height="22" viewBox="0 0 23 22" fill="none" stroke="#4f5163" stroke-width="1.9" stroke-linejoin="round">
<path d="M5 6V2.2C5 1.3 5.7 0.6 6.6 0.6H16.4C17.3 0.6 18 1.3 18 2.2V6"/>
<path d="M4.8 18.6H3.6C2 18.6 1 17.6 1 16V8.6C1 7 2 6 3.6 6H19.4C21 6 22 7 22 8.6V16C22 17.6 21 18.6 19.4 18.6H18.2"/>
<path d="M5.5 14.3H17.5" stroke-width="1.5"/>
<path d="M5.3 16.8H17.7L18.3 19.6C18.5 20.8 18 21.4 17 21.4H6C5 21.4 4.5 20.8 4.7 19.6Z"/>
<rect x="17.2" y="9.3" width="2.2" height="2.2" fill="#4f5163" stroke="none" transform="rotate(45 18.3 10.4)"/></svg>
<div class="t" style="left:1642.2px;top:301.16px;font-size:16px;color:#1f1f1f;letter-spacing:0.22px;">Danh sách mượn quá hạn chưa trả</div>
<div class="a" style="left:0;top:0;width:1920px;height:953px;border:2px solid #a4a4a4;pointer-events:none"></div>
<div class="a" style="left:1581.8px;top:273.5px;width:338.5px;height:67px;border:2px solid #fb3030"></div>
</body></html>
